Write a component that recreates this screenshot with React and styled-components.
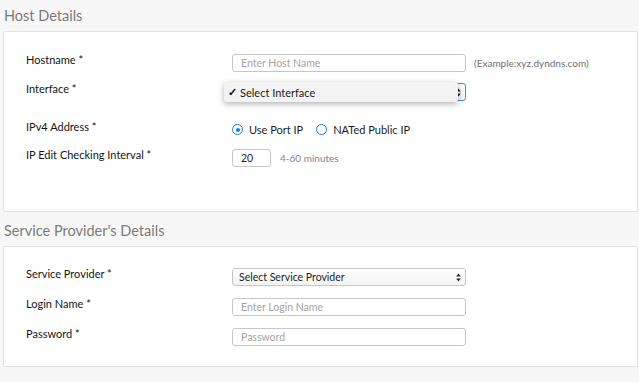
import styled, { createGlobalStyle } from 'styled-components';

const Global = createGlobalStyle`
  html, body {
    margin: 0;
    background: #f7f7f7;
    font-family: Lato, "Open Sans", sans-serif;
  }
`;

const Page = styled.div`
  width: 639px;
  height: 382px;
  overflow: hidden;
  padding: 0 1px 0 3px;
  box-sizing: border-box;
`;

const Title = styled.h2`
  margin: 0;
  height: 31px;
  line-height: 31px;
  padding-left: 1px;
  font-size: 14.5px;
  font-weight: 400;
  color: #7b7b7b;
`;

const Panel = styled.div`
  background: #fff;
  border: 1px solid #e2e2e2;
  border-radius: 2px;
  padding: ${p => p.$pad};
  margin-bottom: 3px;
`;

const Row = styled.div`
  display: flex;
  align-items: flex-start;
  height: ${p => p.$h}px;
`;

const Label = styled.div`
  width: 206px;
  padding-left: 22px;
  flex-shrink: 0;
  font-size: 11px;
  line-height: 14px;
  color: #141414;
  margin-top: -1px;
`;

const Field = styled.div`
  position: relative;
  display: flex;
  align-items: center;
  gap: ${p => p.$gap || 8}px;
`;

const Input = styled.div`
  width: ${p => p.$w || 234}px;
  height: 18px;
  box-sizing: border-box;
  border: 1px solid ${p => (p.$focus ? '#3d8fd6' : '#c6c6c6')};
  border-radius: 3px;
  padding-left: ${p => p.$pl || 8}px;
  font-size: 10.5px;
  line-height: 16px;
  color: ${p => (p.$placeholder ? '#a3a3a3' : '#1c1c1c')};
  background: ${p => (p.$select ? 'linear-gradient(#ffffff, #f3f3f3)' : '#fff')};
  position: relative;
`;

const Arrows = styled.svg`
  position: absolute;
  right: 4px;
  top: 4px;
`;

const Hint = styled.span`
  font-size: 10px;
  color: ${p => p.$color || '#707070'};
`;

const Popup = styled.div`
  position: absolute;
  left: -8px;
  top: -1px;
  width: 234px;
  height: 20px;
  box-sizing: border-box;
  background: #f3f3f3;
  border-radius: 3px;
  box-shadow: 0 2px 6px rgba(0, 0, 0, 0.3);
  display: flex;
  align-items: center;
  padding-left: 4px;
  font-size: 11px;
  color: #1a1a1a;
`;

const Check = styled.span`
  width: 12px;
  font-size: 11px;
  font-weight: 700;
`;

const RadioGroup = styled.div`
  display: flex;
  align-items: center;
  margin-top: 2px;
`;

const Radio = styled.span`
  width: 11px;
  height: 11px;
  box-sizing: border-box;
  border-radius: 50%;
  border: 1.6px solid #1a7fcb;
  display: inline-flex;
  align-items: center;
  justify-content: center;
  margin-right: 6px;
  &::after {
    content: '';
    width: 4px;
    height: 4px;
    border-radius: 50%;
    background: ${p => (p.$on ? '#1a7fcb' : 'transparent')};
  }
`;

const RadioText = styled.span`
  font-size: 11px;
  color: #1c1c1c;
  margin-right: 13px;
`;

const SelectArrows = () => (
  <Arrows width="5" height="9" viewBox="0 0 5 9">
    <path d="M2.5 0.5 L4.8 3.6 L0.2 3.6 Z" fill="#222" />
    <path d="M2.5 8.5 L4.8 5.4 L0.2 5.4 Z" fill="#222" />
  </Arrows>
);

export default function App() {
  return (
    <Page>
      <Global />
      <Title>Host Details</Title>
      <Panel $pad="22px 0 44px">
        <Row $h={29}>
          <Label>Hostname *</Label>
          <Field>
            <Input $placeholder>Enter Host Name</Input>
            <Hint>(Example:xyz.dyndns.com)</Hint>
          </Field>
        </Row>
        <Row $h={38}>
          <Label>Interface *</Label>
          <Field>
            <Input $focus $select>
              <SelectArrows />
            </Input>
            <Popup>
              <Check>✓</Check>
              Select Interface
            </Popup>
          </Field>
        </Row>
        <Row $h={28}>
          <Label>IPv4 Address *</Label>
          <RadioGroup>
            <Radio $on />
            <RadioText>Use Port IP</RadioText>
            <Radio />
            <RadioText>NATed Public IP</RadioText>
          </RadioGroup>
        </Row>
        <Row $h={18}>
          <Label>IP Edit Checking Interval *</Label>
          <Field $gap={9}>
            <Input $w={39}>20</Input>
            <Hint $color="#858585">4-60 minutes</Hint>
          </Field>
        </Row>
      </Panel>
      <Title>Service Provider's Details</Title>
      <Panel $pad="21px 0 20px">
        <Row $h={30}>
          <Label>Service Provider *</Label>
          <Input $select $pl={6}>
            Select Service Provider
            <SelectArrows />
          </Input>
        </Row>
        <Row $h={30}>
          <Label>Login Name *</Label>
          <Input $placeholder>Enter Login Name</Input>
        </Row>
        <Row $h={18}>
          <Label>Password *</Label>
          <Input $placeholder>Password</Input>
        </Row>
      </Panel>
    </Page>
  );
}
